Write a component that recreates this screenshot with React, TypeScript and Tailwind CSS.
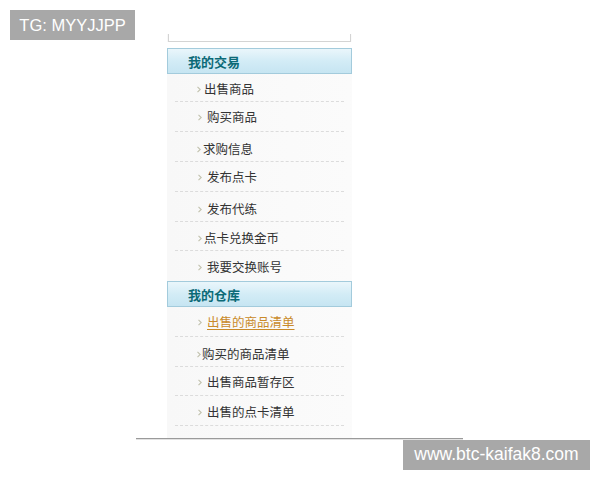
import React from "react";

const Arrow = () => (
  <svg width="4" height="7" viewBox="0 0 4 7" className="shrink-0">
    <path d="M0.5 0.8 L3.2 3.5 L0.5 6.2" fill="none" stroke="#c2c2ae" strokeWidth="1.1" />
  </svg>
);

type Item = { t: string; h: number; pl: number; gap: number; sep: boolean; active?: boolean; pt?: number };

const group1: Item[] = [
  { t: "出售商品", h: 28, pl: 30, gap: 3, sep: true, pt: 4 },
  { t: "购买商品", h: 30, pl: 31, gap: 5, sep: true, pt: 2 },
  { t: "求购信息", h: 30, pl: 30, gap: 2, sep: true, pt: 6 },
  { t: "发布点卡", h: 30, pl: 31, gap: 5, sep: true, pt: 2 },
  { t: "发布代练", h: 30, pl: 31, gap: 5, sep: true, pt: 6 },
  { t: "点卡兑换金币", h: 29, pl: 31, gap: 2, sep: true, pt: 4 },
  { t: "我要交换账号", h: 30, pl: 31, gap: 5, sep: false, pt: 2 },
];

const group2: Item[] = [
  { t: "出售的商品清单", h: 30, pl: 31, gap: 5, sep: true, active: true, pt: 2 },
  { t: "购买的商品清单", h: 30, pl: 30, gap: 1, sep: true, pt: 5 },
  { t: "出售商品暂存区", h: 29, pl: 31, gap: 5, sep: true, pt: 3 },
  { t: "出售的点卡清单", h: 30, pl: 31, gap: 5, sep: true, pt: 3 },
];

const Row = ({ it }: { it: Item }) => (
  <div className="mx-[8px]" style={{ height: it.h }}>
    <div
      className={
        "h-full flex items-center " +
        (it.sep ? "border-b border-dashed border-[#dcdcdc]" : "")
      }
      style={{ paddingLeft: it.pl - 8, paddingTop: it.pt ?? 0, gap: it.gap }}
    >
      <Arrow />
      <span
        className={
          it.active
            ? "text-[12.5px] leading-none text-[#c98a2a] underline underline-offset-2 decoration-[#c98a2a]"
            : "text-[12.5px] leading-none text-[#333333]"
        }
      >
        {it.t}
      </span>
    </div>
  </div>
);

const Header = ({ t }: { t: string }) => (
  <div className="h-[26px] border border-[#a3cbdc] bg-gradient-to-b from-[#eaf6fb] via-[#d3ecf6] to-[#c6e5f2] flex items-center pl-[20px] pt-[1px]">
    <span className="text-[13px] font-bold text-[#0c6a77] leading-none">{t}</span>
  </div>
);

export default function App() {
  return (
    <div
      className="w-[600px] h-[480px] bg-white relative overflow-hidden"
      style={{ fontFamily: '"Noto Sans CJK SC", "Liberation Sans", sans-serif' }}
    >
      <div className="pt-[34px] pl-[136px]">
        <div className="w-[327px]">
          <div className="ml-[31px] w-[185px] bg-gradient-to-r from-[#f8f8f8] to-[#fbfbfb] pb-[12px]">
            <div className="h-[8px] mx-[1px] bg-white border-x border-b border-[#d4d4d4]" />
            <div className="h-[6px] bg-white" />
            <Header t="我的交易" />
            {group1.map((it) => (
              <Row key={it.t} it={it} />
            ))}
            <Header t="我的仓库" />
            {group2.map((it) => (
              <Row key={it.t} it={it} />
            ))}
          </div>
          <div className="h-[1px] bg-[#9a9a9a]" />
          <div className="h-[1px] bg-[#e2e2e2]" />
        </div>
      </div>

      <div className="absolute left-[10px] top-[10px] w-[125px] h-[30px] bg-[#a8a8a8] flex items-center justify-center">
        <span className="text-white text-[16.5px] leading-none" style={{ fontFamily: '"Liberation Sans", Arial, sans-serif' }}>
          TG: MYYJJPP
        </span>
      </div>
      <div className="absolute left-[403px] top-[440px] w-[187px] h-[30px] bg-[#a8a8a8] flex items-center justify-center">
        <span className="text-white text-[17.5px] leading-none" style={{ fontFamily: '"Liberation Sans", Arial, sans-serif' }}>
          www.btc-kaifak8.com
        </span>
      </div>
    </div>
  );
}
